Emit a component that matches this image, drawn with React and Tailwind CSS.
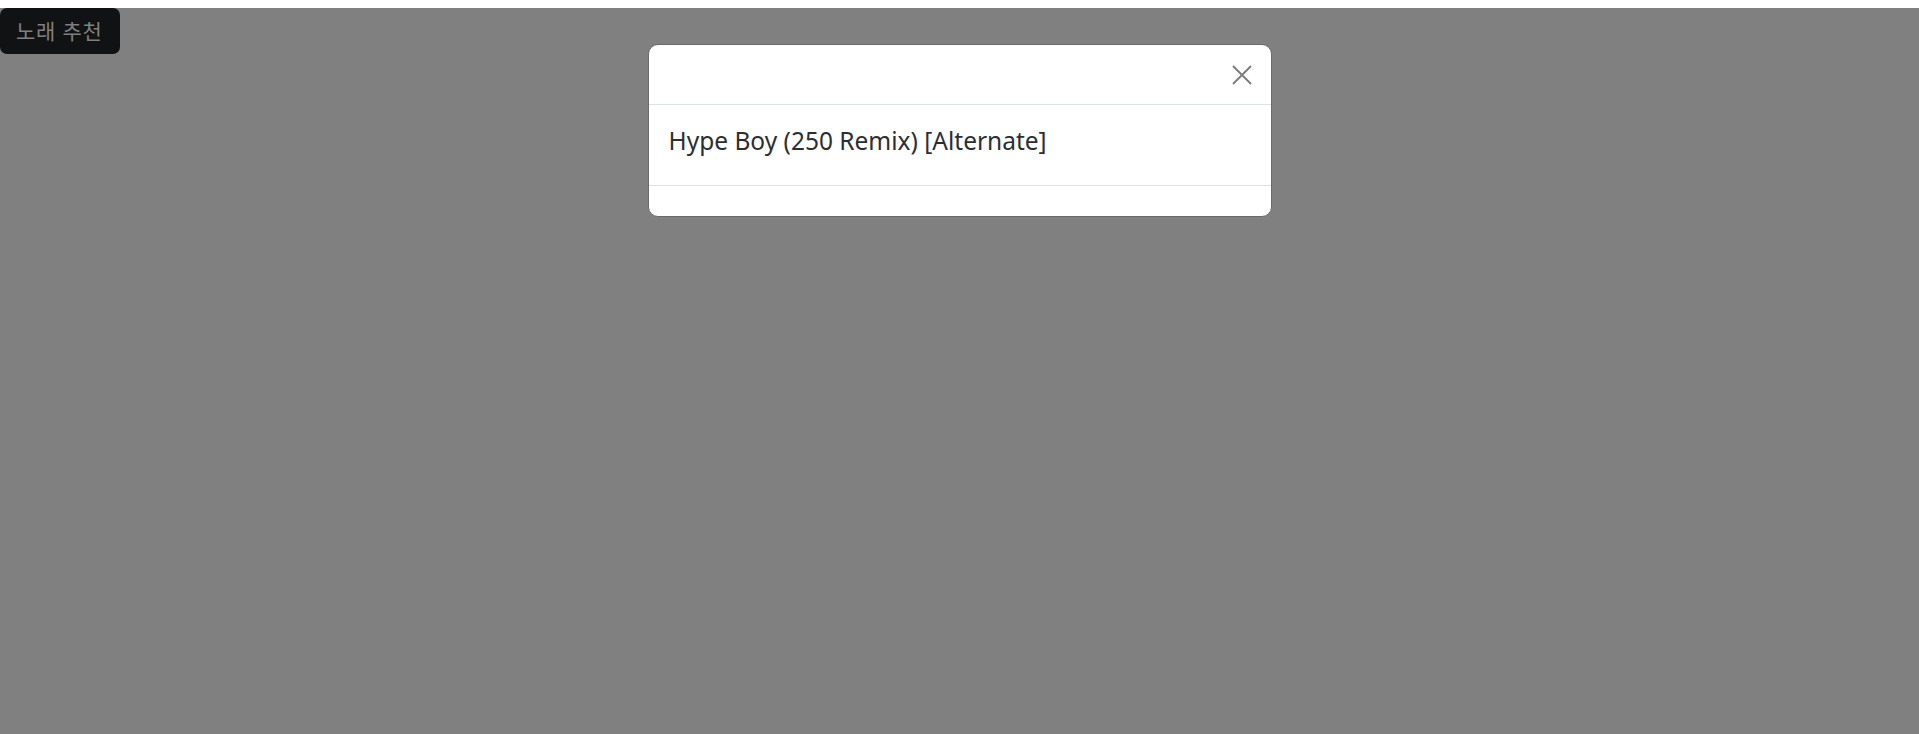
import React from 'react';

const FONT = { fontFamily: '"Noto Sans", "Noto Sans CJK KR", sans-serif' };

const App = () => {
  return (
    <div className="h-[734px] bg-white pt-2 overflow-hidden" style={FONT}>
      <div className="relative h-full bg-[#808080]">
        {/* dimmed page content */}
        <button className="h-[46px] pl-[16px] pr-[17px] rounded-[7px] bg-[#111214] text-[#808080] text-[21px] leading-none tracking-[0.8px]">
          노래 추천
        </button>

        {/* modal */}
        <div className="absolute inset-x-0 top-9 flex justify-center">
          <div className="w-[624px] bg-white rounded-[10px] border border-[#6a6a6a]">
            <div className="h-[60px] flex items-center justify-end px-[19px] border-b border-[#dee2e6]">
              <button className="w-5 h-5 flex items-center justify-center text-[#7a7a7a]">
                <svg width="20" height="20" viewBox="0 0 20 20" fill="none" stroke="currentColor" strokeWidth="1.8">
                  <path d="M1 1L19 19M19 1L1 19" />
                </svg>
              </button>
            </div>
            <div className="px-5 pt-[21px] pb-[19px] border-b border-[#dee2e6]">
              <h5 className="text-[24.5px] leading-[30px] mb-[10px] text-[#2b2f33]">
                Hype Boy (250 Remix) [Alternate]
              </h5>
            </div>
            <div className="h-[30px]" />
          </div>
        </div>
      </div>
    </div>
  );
};

export default App;
